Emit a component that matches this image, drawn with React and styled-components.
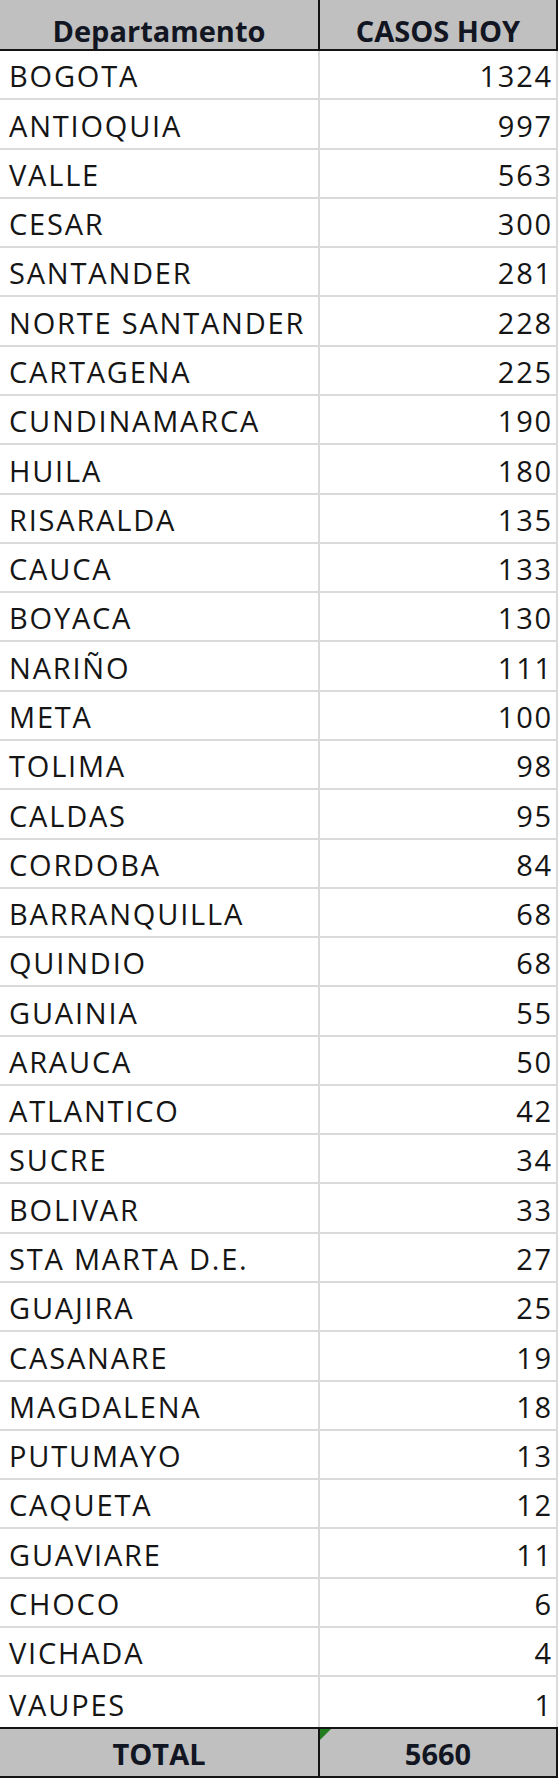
import React from "react";
import styled, { createGlobalStyle } from "styled-components";

const rows = [
  ["BOGOTA", 1324],
  ["ANTIOQUIA", 997],
  ["VALLE", 563],
  ["CESAR", 300],
  ["SANTANDER", 281],
  ["NORTE SANTANDER", 228],
  ["CARTAGENA", 225],
  ["CUNDINAMARCA", 190],
  ["HUILA", 180],
  ["RISARALDA", 135],
  ["CAUCA", 133],
  ["BOYACA", 130],
  ["NARIÑO", 111],
  ["META", 100],
  ["TOLIMA", 98],
  ["CALDAS", 95],
  ["CORDOBA", 84],
  ["BARRANQUILLA", 68],
  ["QUINDIO", 68],
  ["GUAINIA", 55],
  ["ARAUCA", 50],
  ["ATLANTICO", 42],
  ["SUCRE", 34],
  ["BOLIVAR", 33],
  ["STA MARTA D.E.", 27],
  ["GUAJIRA", 25],
  ["CASANARE", 19],
  ["MAGDALENA", 18],
  ["PUTUMAYO", 13],
  ["CAQUETA", 12],
  ["GUAVIARE", 11],
  ["CHOCO", 6],
  ["VICHADA", 4],
  ["VAUPES", 1]
];

function App() {
  const total = rows.reduce((sum, r) => sum + r[1], 0);

  return (
    <>
      <GlobalStyle />
      <Sheet>
        <HeadCell>Departamento</HeadCell>
        <HeadCell>CASOS HOY</HeadCell>

        {rows.map(([name, count]) => (
          <React.Fragment key={name}>
            <Cell>{name}</Cell>
            <Cell $number>{count}</Cell>
          </React.Fragment>
        ))}

        <TotalCell>TOTAL</TotalCell>
        <TotalCell $flag>{total}</TotalCell>
      </Sheet>
    </>
  );
}

export default App;

const GlobalStyle = createGlobalStyle`
  html, body {
    margin: 0;
    padding: 0;
    background: #ffffff;
  }
  body {
    font-family: "Open Sans", "Liberation Sans", sans-serif;
    color: #151515;
  }
`;

const Sheet = styled.div`
  display: grid;
  grid-template-columns: 320px 238px;
  width: 558px;
  font-size: 29px;
  line-height: 1;
`;

const HeadCell = styled.div`
  box-sizing: border-box;
  height: 51px;
  display: flex;
  align-items: flex-end;
  justify-content: center;
  padding-bottom: 4px;
  background: #c0c0c0;
  border-bottom: 2px solid #141414;
  border-right: 2px solid #141414;
  font-weight: 700;
  color: #121622;
  white-space: nowrap;
`;

const Cell = styled.div`
  box-sizing: border-box;
  height: calc(1676px / 34);
  display: flex;
  align-items: flex-end;
  justify-content: ${(p) => (p.$number ? "flex-end" : "flex-start")};
  padding: 0 ${(p) => (p.$number ? "3px" : "0")} 8px ${(p) => (p.$number ? "0" : "9px")};
  border-bottom: 2px solid #dadada;
  border-right: 2px solid #dadada;
  letter-spacing: 1.8px;
  white-space: nowrap;
  &:nth-last-child(3),
  &:nth-last-child(4) {
    border-bottom: none;
  }
`;

const TotalCell = styled.div`
  position: relative;
  box-sizing: border-box;
  height: 51px;
  display: flex;
  align-items: flex-end;
  justify-content: center;
  padding-bottom: 8px;
  background: #c0c0c0;
  border-top: 2px solid #141414;
  border-bottom: 2px solid #141414;
  border-right: 2px solid #141414;
  font-weight: 700;
  color: #121622;

  ${(p) =>
    p.$flag &&
    `
    &::before {
      content: "";
      position: absolute;
      top: 0;
      left: 0;
      border-top: 11px solid #1f7d1f;
      border-right: 11px solid transparent;
    }
  `}
`;
